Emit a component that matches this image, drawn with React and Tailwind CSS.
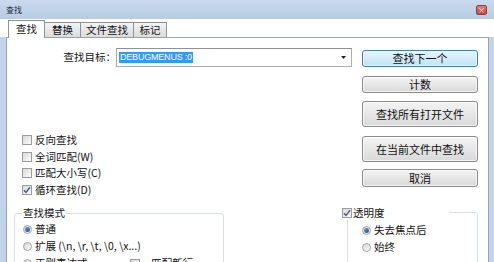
import React from "react";

function CheckBox({ checked }) {
  return (
    <span className="w-[10px] h-[10px] shrink-0 border border-[#9c9c9c] bg-gradient-to-br from-[#d9d9d9] to-[#fbfbfb] flex items-center justify-center">
      {checked && (
        <svg width="8" height="8" viewBox="0 0 8 8">
          <path d="M1 4.2 L3 6.4 L7 1.2" fill="none" stroke="#4a5a9a" strokeWidth="1.4" />
        </svg>
      )}
    </span>
  );
}

function Radio({ on }) {
  return (
    <span className="w-[9px] h-[9px] shrink-0 rounded-full border border-[#a3a3a3] bg-gradient-to-br from-[#d6d6d6] to-[#fbfbfb] flex items-center justify-center">
      {on && <span className="w-[5px] h-[5px] rounded-full bg-gradient-to-br from-[#6f9ad0] to-[#1f4f93]" />}
    </span>
  );
}

function Btn({ children, primary, className }) {
  const look = primary
    ? "border-[#3c7fb1] from-[#e8f5fc] to-[#bfe3f7]"
    : "border-[#8a8a8a] from-[#f4f4f4] to-[#d9d9d9]";
  return (
    <div
      className={
        "rounded-[3px] border bg-gradient-to-b flex items-center justify-center text-[11px] leading-none shadow-[inset_0_0_0_1px_rgba(255,255,255,0.7)] " +
        look +
        " " +
        className
      }
    >
      {children}
    </div>
  );
}

const options = [
  { label: "反向查找", checked: false },
  { label: "全词匹配(W)", checked: false },
  { label: "匹配大小写(C)", checked: false },
  { label: "循环查找(D)", checked: true },
];

export default function App() {
  return (
    <div className="w-[494px] h-[262px] overflow-hidden flex flex-col bg-white text-[#111] font-['Noto_Sans_CJK_SC','Noto_Sans',sans-serif] text-[10.5px] leading-none">
      {/* title bar */}
      <div className="h-[19px] shrink-0 flex items-center justify-between pl-[6px] pr-[7px] bg-gradient-to-b from-[#cadaee] to-[#b7cbe3]">
        <span className="text-[8px] text-[#1d2a3a]">查找</span>
        <span className="w-[11px] h-[10px] rounded-[2px] border border-[#8e3f3a] bg-gradient-to-b from-[#d8837b] to-[#b8463e] flex items-center justify-center text-[8px] text-[#f6dcd9] leading-none">
          ×
        </span>
      </div>

      {/* tabs */}
      <div className="h-[19px] shrink-0 -mb-px flex items-end pl-[8px] relative z-10">
        <div className="h-[18px] w-[37px] border border-b-0 border-[#8e9299] bg-white flex items-center justify-center relative z-10">
          查找
        </div>
        <div className="h-[15px] mb-px w-[37px] -ml-px border border-b-0 border-[#8e9299] bg-gradient-to-b from-[#f3f3f3] to-[#dcdcdc] flex items-center justify-center">
          替换
        </div>
        <div className="h-[15px] mb-px w-[54px] -ml-px border border-b-0 border-[#8e9299] bg-gradient-to-b from-[#f3f3f3] to-[#dcdcdc] flex items-center justify-center">
          文件查找
        </div>
        <div className="h-[15px] mb-px w-[34px] -ml-px border border-b-0 border-[#8e9299] bg-gradient-to-b from-[#f3f3f3] to-[#dcdcdc] flex items-center justify-center">
          标记
        </div>
      </div>

      {/* tab page */}
      <div className="flex-1 min-h-0 flex">
        <div className="w-[6px] shrink-0 bg-[#c2d4ea]" />
        <div className="flex-1 min-w-0 border-t border-x border-[#9da2aa] bg-white flex flex-col">
          <div className="flex">
            <div className="flex-1 min-w-0 flex flex-col">
              <div className="mt-[10px] flex justify-end items-center">
                <span className="mr-[0px]">查找目标：</span>
                <div className="w-[236px] h-[19px] border border-[#abadb3] border-t-[#8e9196] bg-white flex items-center justify-between pl-[2px] pr-[5px]">
                  <span className="h-[11px] px-[1px] bg-[#3399ff] text-white font-['Liberation_Sans',sans-serif] text-[9px] tracking-[-0.2px] flex items-center">
                    DEBUGMENUS :0
                  </span>
                  <svg width="5" height="3" viewBox="0 0 5 3">
                    <path d="M0 0 H5 L2.5 3 Z" fill="#222" />
                  </svg>
                </div>
              </div>

              <div className="mt-[65px] pl-[15px] flex flex-col">
                {options.map((o) => (
                  <div key={o.label} className="h-[16.5px] flex items-center gap-[3px]">
                    <CheckBox checked={o.checked} />
                    <span>{o.label}</span>
                  </div>
                ))}
              </div>
            </div>

            <div className="w-[116px] shrink-0 mx-[10px] pt-[12px] flex flex-col">
              <Btn primary className="h-[17px]">查找下一个</Btn>
              <Btn className="h-[17px] mt-[9px]">计数</Btn>
              <Btn className="h-[26px] mt-[8px]">查找所有打开文件</Btn>
              <Btn className="h-[26px] mt-[9px]">在当前文件中查找</Btn>
              <Btn className="h-[18px] mt-[7px]">取消</Btn>
            </div>
          </div>

          <div className="flex items-start">
            {/* search mode group */}
            <div className="relative ml-[7px] mt-[15px] w-[210px] h-[80px] border border-[#d5dfe5] rounded-[3px] pt-[7px] pl-[8px]">
              <span className="absolute left-[7px] top-[-6px] px-[1px] bg-white">查找模式</span>
              <div className="h-[17px] flex items-center gap-[3px]">
                <Radio on />
                <span>普通</span>
              </div>
              <div className="h-[17px] flex items-center gap-[3px]">
                <Radio />
                <span>{"扩展 (\\n, \\r, \\t, \\0, \\x...)"}</span>
              </div>
              <div className="h-[17px] flex items-center">
                <Radio />
                <span className="ml-[3px] w-[95px]">正则表达式</span>
                <CheckBox />
                <span className="ml-[6px]">. 匹配新行</span>
              </div>
            </div>

            {/* transparency group */}
            <div className="relative ml-auto mr-[10px] mt-[14px] w-[131px] h-[80px] border border-[#d5dfe5] rounded-[3px] pt-[9px] pl-[14px]">
              <span className="absolute left-[-6px] top-[-7px] w-[107px] h-[14px] bg-white flex items-center gap-[1px]">
                <CheckBox checked />
                <span>透明度</span>
              </span>
              <div className="h-[17px] flex items-center gap-[3px]">
                <Radio on />
                <span>失去焦点后</span>
              </div>
              <div className="h-[17px] flex items-center gap-[3px]">
                <Radio />
                <span>始终</span>
              </div>
              <div className="h-[17px] flex items-center pl-[58px]">
                <span className="w-[17px] h-[8px] mt-[6px] rounded-[2px] border border-[#c9c9c9] bg-[#ececec]" />
              </div>
            </div>
          </div>
        </div>
        <div className="w-[5px] shrink-0 bg-[#c2d4ea]" />
      </div>
    </div>
  );
}
